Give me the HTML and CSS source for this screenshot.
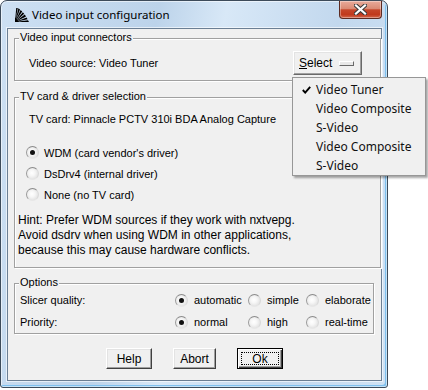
FILE: index.html
```html
<!DOCTYPE html>
<html>
<head>
<meta charset="utf-8">
<link rel="stylesheet" href="styles.css">
</head>
<body>
<div class="window">
  <div class="titlebar">
    <svg class="appicon" width="14" height="14" viewBox="0 0 14 14">
      <path d="M0 14 L14 14 L13 12.2 Z M0 14 L12.6 11.2 L11.6 9.4 Z M0 14 L11 8.4 L9.8 6.6 Z M0 14 L9.2 5.8 L7.8 4.2 Z M0 14 L7.2 3.4 L5.6 2 Z M0 14 L5 1.4 L3.4 0.3 Z M0 14 L2.8 0 L1.2 0 Z" fill="#000"/>
      <path d="M0 14 L4 14 L0 9 Z" fill="#000"/>
    </svg>
    <span class="title">Video input configuration</span>
    <div class="close">
      <svg width="13" height="11" viewBox="0 0 13 11">
        <path d="M2 1.5 L11 9.5 M11 1.5 L2 9.5" stroke="#3a3a3a" stroke-width="4.2" stroke-linecap="square" fill="none"/>
        <path d="M2 1.5 L11 9.5 M11 1.5 L2 9.5" stroke="#fff" stroke-width="2.2" stroke-linecap="square" fill="none"/>
      </svg>
    </div>
  </div>
  <div class="client">
    <div class="group g1">
      <div class="legend">Video input connectors</div>
      <div class="srcrow">
        <span>Video source: Video Tuner</span>
        <div class="menubtn"><span><u>S</u>elect</span><span class="indicator"></span></div>
      </div>
    </div>
    <div class="group g2">
      <div class="legend">TV card &amp; driver selection</div>
      <div class="cardline">TV card: Pinnacle PCTV 310i BDA Analog Capture</div>
      <div class="radios">
        <div class="radio"><span class="rb on"></span>WDM (card vendor's driver)</div>
        <div class="radio"><span class="rb"></span>DsDrv4 (internal driver)</div>
        <div class="radio"><span class="rb"></span>None (no TV card)</div>
      </div>
      <div class="hint">Hint: Prefer WDM sources if they work with nxtvepg.<br>Avoid dsdrv when using WDM in other applications,<br>because this may cause hardware conflicts.</div>
    </div>
    <div class="group g3">
      <div class="legend">Options</div>
      <div class="optgrid">
        <span>Slicer quality:</span>
        <div class="radio"><span class="rb on"></span>automatic</div>
        <div class="radio"><span class="rb"></span>simple</div>
        <div class="radio"><span class="rb"></span>elaborate</div>
        <span>Priority:</span>
        <div class="radio"><span class="rb on"></span>normal</div>
        <div class="radio"><span class="rb"></span>high</div>
        <div class="radio"><span class="rb"></span>real-time</div>
      </div>
    </div>
    <div class="buttons">
      <div class="btn b-help">Help</div>
      <div class="btn b-abort">Abort</div>
      <div class="btn b-ok"><span class="focus">Ok</span></div>
    </div>
  </div>
</div>
<div class="menu">
  <div class="item"><svg class="check" width="9" height="8" viewBox="0 0 9 8"><path d="M0.8 4 L3.2 6.6 L8.2 0.8" stroke="#000" stroke-width="1.9" fill="none"/></svg>Video Tuner</div>
  <div class="item">Video Composite</div>
  <div class="item">S-Video</div>
  <div class="item">Video Composite</div>
  <div class="item">S-Video</div>
</div>
</body>
</html>
```
FILE: styles.css
```css
html, body {
  margin: 0;
  padding: 0;
  background: #fff;
}
body {
  width: 428px;
  height: 390px;
  position: relative;
  overflow: hidden;
  font-family: "Liberation Sans", Arial, sans-serif;
  font-size: 11px;
  color: #000;
}
.window {
  box-sizing: border-box;
  width: 388px;
  height: 388px;
  border: 1px solid #3d4b5a;
  border-radius: 7px 7px 3px 3px;
  background: linear-gradient(100deg, #cde0f3 0%, #bcd3ea 35%, #d8e8f7 50%, #c2d8ee 75%, #cfe2f4 100%);
  box-shadow: inset 0 0 0 1px rgba(255,255,255,0.55), inset -3px -3px 0 -1px #7fc0ee;
}
.titlebar {
  height: 27px;
  display: flex;
  align-items: center;
  padding-left: 14px;
}
.appicon {
  margin-top: 1px;
  flex: none;
}
.title {
  margin-left: 3px;
  font-family: "Noto Sans", sans-serif;
  font-size: 11.5px;
  color: #000;
  line-height: 16px;
}
.close {
  align-self: flex-start;
  margin-left: auto;
  margin-right: 5px;
  box-sizing: border-box;
  width: 43px;
  height: 18px;
  border: 1px solid #5c2b22;
  border-top: none;
  border-radius: 0 0 4px 4px;
  background: linear-gradient(#e8ab9b 0%, #d98a74 45%, #c5462a 52%, #c0391c 80%, #d2684c 100%);
  box-shadow: inset 0 0 0 1px rgba(255,255,255,0.35);
  display: flex;
  align-items: center;
  justify-content: center;
}
.client {
  box-sizing: border-box;
  margin: 0 5px 0 6px;
  height: 353px;
  border: 1px solid #6b7f94;
  background: #f0f0f0;
  display: flex;
  flex-direction: column;
  box-shadow: 0 0 0 1px rgba(255,255,255,0.6);
}
.group {
  border: 1px solid #a0a0a0;
  box-shadow: inset 1px 1px 0 #fff, 1px 1px 0 #fff;
  margin-left: 6px;
}
.legend {
  width: fit-content;
  margin-top: -8px;
  margin-left: 4px;
  padding: 0 1px;
  line-height: 13px;
  height: 13px;
  background: #f0f0f0;
}
.g1 {
  margin-top: 9px;
  padding-bottom: 5px;
}
.srcrow {
  margin-top: 7px;
  height: 24px;
  display: flex;
  align-items: center;
  padding-left: 14px;
}
.menubtn {
  margin-left: auto;
  margin-right: 18px;
  box-sizing: border-box;
  width: 69px;
  height: 24px;
  border: 1px solid;
  border-color: #fff #696969 #696969 #fff;
  box-shadow: inset -1px -1px 0 #a0a0a0, inset 1px 1px 0 #e3e3e3;
  display: flex;
  align-items: center;
  padding: 0 7px 0 5px;
  font-size: 12px;
}
.menubtn u {
  text-decoration-thickness: 1px;
}
.indicator {
  margin-left: auto;
  box-sizing: border-box;
  width: 15px;
  height: 5px;
  border: 1px solid;
  border-color: #fff #696969 #696969 #fff;
  background: #e8e8e8;
}
.g2 {
  margin-top: 16px;
  padding-bottom: 9px;
}
.cardline {
  margin-top: 10px;
  padding-left: 14px;
  line-height: 13px;
}
.radios {
  margin-top: 16px;
  padding-left: 11px;
}
.radio {
  display: flex;
  align-items: center;
  height: 21px;
}
.rb {
  box-sizing: border-box;
  width: 13px;
  height: 13px;
  margin-right: 5px;
  border-radius: 50%;
  border: 1px solid;
  border-color: #8a8a8a #d8d8d8 #e6e6e6 #9a9a9a;
  background: radial-gradient(circle at 45% 45%, #ffffff 0, #f6f6f6 35%, #d6d6d6 100%);
  display: grid;
  place-items: center;
  flex: none;
}
.rb.on::after {
  content: "";
  width: 5px;
  height: 5px;
  border-radius: 50%;
  background: #111;
}
.hint {
  margin-top: 8px;
  padding-left: 3px;
  font-size: 12px;
  line-height: 15px;
}
.g3 {
  margin-top: 15px;
  width: 360px;
  box-sizing: border-box;
}
.optgrid {
  display: grid;
  grid-template-columns: 155px 73px 58px auto;
  grid-auto-rows: 22px;
  align-items: center;
  padding-left: 5px;
}
.optgrid .radio {
  height: 22px;
}
.optgrid .rb {
  margin-right: 6px;
}
.buttons {
  margin-top: 14px;
  display: flex;
  justify-content: center;
  gap: 21px;
}
.btn {
  box-sizing: border-box;
  height: 21px;
  border: 1px solid;
  border-color: #fff #404040 #404040 #fff;
  box-shadow: inset -1px -1px 0 #a0a0a0, inset 1px 1px 0 #e3e3e3;
  display: flex;
  align-items: center;
  justify-content: center;
  font-size: 12px;
}
.b-help { width: 46px; }
.b-abort { width: 43px; }
.b-ok {
  width: 46px;
  border: 1px solid #000;
  box-shadow: inset 1px 1px 0 #fff, inset -1px -1px 0 #404040, inset -2px -2px 0 #a0a0a0;
  padding: 3px;
}
.focus {
  box-sizing: border-box;
  width: 100%;
  height: 100%;
  border: 1px dotted #000;
  display: flex;
  align-items: center;
  justify-content: center;
}
.menu {
  position: absolute;
  left: 292px;
  top: 77px;
  box-sizing: border-box;
  width: 134px;
  height: 99px;
  border: 1px solid #979797;
  background: #f0f0f0;
  box-shadow: 2px 2px 2px rgba(0,0,0,0.35);
  padding-top: 2px;
  font-family: "Noto Sans", sans-serif;
  font-size: 12px;
}
.item {
  height: 19px;
  line-height: 19px;
  padding-left: 23px;
  position: relative;
  color: #111;
}
.check {
  position: absolute;
  left: 9px;
  top: 6px;
}
```
